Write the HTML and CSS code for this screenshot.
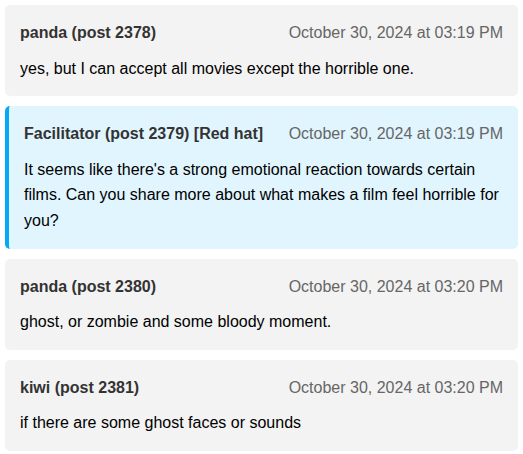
FILE: index.html
```html
<!DOCTYPE html>
<html>
<head>
<meta charset="utf-8">
<link rel="stylesheet" href="styles.css">
</head>
<body>
<div class="thread">
  <div class="post">
    <div class="post-head"><span class="author">panda (post 2378)</span><span class="date">October 30, 2024 at 03:19 PM</span></div>
    <div class="post-body">yes, but I can accept all movies except the horrible one.</div>
  </div>
  <div class="post facilitator">
    <div class="post-head"><span class="author">Facilitator (post 2379) [Red hat]</span><span class="date">October 30, 2024 at 03:19 PM</span></div>
    <div class="post-body">It seems like there's a strong emotional reaction towards certain films. Can you share more about what makes a film feel horrible for you?</div>
  </div>
  <div class="post">
    <div class="post-head"><span class="author">panda (post 2380)</span><span class="date">October 30, 2024 at 03:20 PM</span></div>
    <div class="post-body">ghost, or zombie and some bloody moment.</div>
  </div>
  <div class="post">
    <div class="post-head"><span class="author">kiwi (post 2381)</span><span class="date">October 30, 2024 at 03:20 PM</span></div>
    <div class="post-body">if there are some ghost faces or sounds</div>
  </div>
</div>
</body>
</html>
```
FILE: styles.css
```css
html, body {
  margin: 0;
  padding: 0;
  background: #ffffff;
}
body {
  font-family: "Liberation Sans", Arial, sans-serif;
  font-size: 16px;
  line-height: 1.6;
  color: #000;
}
.thread {
  padding: 5px;
  display: flex;
  flex-direction: column;
  gap: 10px;
}
.post {
  background: #f3f3f3;
  border-radius: 5px;
  padding: 15px;
}
.post.facilitator {
  background: #e1f5fe;
  border-left: 4px solid #03a9f4;
}
.post-head {
  display: flex;
  justify-content: space-between;
  margin-bottom: 10px;
}
.author {
  font-weight: bold;
  color: #333;
}
.date {
  color: #666;
}
.post-body {
  color: #000;
}
```
